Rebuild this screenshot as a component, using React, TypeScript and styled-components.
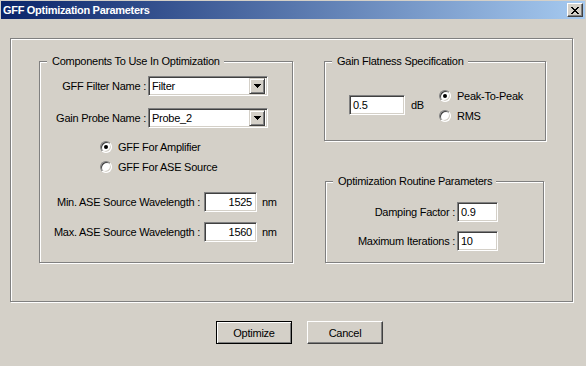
import React from "react";
import styled, { createGlobalStyle } from "styled-components";

const Global = createGlobalStyle`
  html, body { margin: 0; padding: 0; background: #d4d0c8; }
  body {
    width: 586px; height: 366px; overflow: hidden;
    font-family: "Liberation Sans", Arial, sans-serif;
    font-size: 11px; color: #000;
    letter-spacing: -0.25px;
  }
`;

const Window = styled.div`
  width: 586px;
  height: 366px;
  box-sizing: border-box;
  background: #d4d0c8;
  padding: 1px 0 0 1px;
  display: flex;
  flex-direction: column;
`;

const TitleBar = styled.div`
  width: 584px;
  height: 18px;
  box-sizing: border-box;
  padding: 0 2px;
  display: flex;
  align-items: center;
  justify-content: space-between;
  background: linear-gradient(to right, #0a246a, #a6caf0);
`;

const TitleText = styled.span`
  color: #fff;
  font-weight: bold;
  font-size: 11px;
  letter-spacing: -0.3px;
  white-space: nowrap;
`;

const CloseButton = styled.div`
  width: 16px;
  height: 14px;
  box-sizing: border-box;
  background: #d4d0c8;
  border: 1px solid;
  border-color: #fff #404040 #404040 #fff;
  box-shadow: inset -1px -1px #808080;
  display: flex;
  align-items: center;
  justify-content: center;
`;

const Frame = styled.div`
  margin: 19px 0 0 9px;
  width: 563px;
  height: 264px;
  box-sizing: border-box;
  border: 1px solid #808080;
  box-shadow: inset 1px 1px #fff, 1px 1px #fff;
  padding: 22px 0 0 28px;
  display: flex;
  gap: 31px;
`;

const Group = styled.div<{ $w: number; $h: number; $mt?: number; $ml?: number }>`
  position: relative;
  width: ${(p) => p.$w}px;
  height: ${(p) => p.$h}px;
  margin-top: ${(p) => p.$mt ?? 0}px;
  margin-left: ${(p) => p.$ml ?? 0}px;
  box-sizing: border-box;
  border: 1px solid #808080;
  box-shadow: inset 1px 1px #fff, 1px 1px #fff;
  flex-shrink: 0;
`;

const GroupTitle = styled.span`
  position: absolute;
  top: -7px;
  left: 7px;
  padding: 0 4px 0 5px;
  background: #d4d0c8;
  line-height: 13px;
  white-space: nowrap;
`;

const Column = styled.div`
  display: flex;
  flex-direction: column;
`;

const GroupBody = styled.div<{ $pt: number; $pl?: number; $gap?: number }>`
  display: flex;
  flex-direction: column;
  padding-top: ${(p) => p.$pt}px;
  padding-left: ${(p) => p.$pl ?? 0}px;
  gap: ${(p) => p.$gap ?? 0}px;
`;

const Row = styled.div<{ $mt?: number }>`
  display: flex;
  align-items: center;
  margin-top: ${(p) => p.$mt ?? 0}px;
`;

const Label = styled.span<{ $w: number; $mr: number }>`
  width: ${(p) => p.$w}px;
  margin-right: ${(p) => p.$mr}px;
  text-align: right;
  white-space: nowrap;
  flex-shrink: 0;
`;

const sunken = `
  box-sizing: border-box;
  border: 1px solid;
  border-color: #808080 #fff #fff #808080;
  box-shadow: inset 1px 1px #404040, inset -1px -1px #d4d0c8;
  background: #fff;
`;

const Field = styled.div<{ $w: number; $align?: string }>`
  ${sunken}
  width: ${(p) => p.$w}px;
  height: 20px;
  padding: 0 4px 0 3px;
  line-height: 18px;
  text-align: ${(p) => p.$align ?? "left"};
  flex-shrink: 0;
`;

const Combo = styled.div`
  ${sunken}
  width: 120px;
  height: 20px;
  padding: 2px;
  display: flex;
  align-items: center;
  flex-shrink: 0;
`;

const ComboText = styled.span`
  flex: 1;
  padding-left: 1px;
  line-height: 16px;
`;

const DropButton = styled.div`
  width: 16px;
  height: 16px;
  box-sizing: border-box;
  background: #d4d0c8;
  border: 1px solid;
  border-color: #d4d0c8 #404040 #404040 #d4d0c8;
  box-shadow: inset 1px 1px #fff, inset -1px -1px #808080;
  display: flex;
  align-items: center;
  justify-content: center;
`;

const Unit = styled.span<{ $ml: number }>`
  margin-left: ${(p) => p.$ml}px;
`;

const RadioRow = styled.div<{ $mt?: number }>`
  display: flex;
  align-items: center;
  gap: 6px;
  height: 16px;
  margin-top: ${(p) => p.$mt ?? 0}px;
`;

const RadioCircle = styled.span<{ $on?: boolean }>`
  position: relative;
  width: 12px;
  height: 12px;
  box-sizing: border-box;
  border-radius: 50%;
  border: 1px solid;
  border-color: #808080 #fff #fff #808080;
  box-shadow: inset 1px 1px #404040, inset -1px -1px #d4d0c8;
  background: #fff;
  flex-shrink: 0;
  &::after {
    content: "";
    display: ${(p) => (p.$on ? "block" : "none")};
    position: absolute;
    left: 3px;
    top: 3px;
    width: 4px;
    height: 4px;
    border-radius: 50%;
    background: #000;
  }
`;

const GainRow = styled.div`
  display: flex;
  align-items: flex-start;
  padding: 26px 0 0 24px;
`;

const UnitBlock = styled.div`
  width: 90px;
  height: 20px;
  margin-top: 7px;
  display: flex;
  align-items: center;
`;

const RadioColumn = styled.div`
  display: flex;
  flex-direction: column;
  gap: 4px;
`;

const ButtonRow = styled.div`
  display: flex;
  gap: 15px;
  margin-top: 19px;
  padding-left: 215px;
`;

const Button = styled.div<{ $default?: boolean }>`
  width: 76px;
  height: 23px;
  box-sizing: border-box;
  display: flex;
  align-items: center;
  justify-content: center;
  background: #d4d0c8;
  border: 1px solid;
  border-color: ${(p) => (p.$default ? "#000" : "#fff #404040 #404040 #fff")};
  box-shadow: ${(p) =>
    p.$default ? "inset 1px 1px #fff, inset -1px -1px #808080" : "inset -1px -1px #808080"};
`;

const CloseGlyph = () => (
  <svg width="8" height="7" viewBox="0 0 8 7" shapeRendering="crispEdges">
    <path
      fill="#000"
      d="M0 0h2v1H0zM6 0h2v1H6zM1 1h2v1H1zM5 1h2v1H5zM2 2h4v1H2zM3 3h2v1H3zM2 4h4v1H2zM1 5h2v1H1zM5 5h2v1H5zM0 6h2v1H0zM6 6h2v1H6z"
    />
  </svg>
);

const ArrowGlyph = () => (
  <svg width="7" height="4" viewBox="0 0 7 4" shapeRendering="crispEdges">
    <path fill="#000" d="M0 0h7v1H0zM1 1h5v1H1zM2 2h3v1H2zM3 3h1v1H3z" />
  </svg>
);

export default function App() {
  return (
    <>
      <Global />
      <Window>
        <TitleBar>
          <TitleText>GFF Optimization Parameters</TitleText>
          <CloseButton>
            <CloseGlyph />
          </CloseButton>
        </TitleBar>
        <Frame>
          <Group $w={254} $h={202}>
            <GroupTitle>Components To Use In Optimization</GroupTitle>
            <GroupBody $pt={14}>
              <Row>
                <Label $w={106} $mr={2}>GFF Filter Name :</Label>
                <Combo>
                  <ComboText>Filter</ComboText>
                  <DropButton>
                    <ArrowGlyph />
                  </DropButton>
                </Combo>
              </Row>
              <Row $mt={12}>
                <Label $w={106} $mr={2}>Gain Probe Name :</Label>
                <Combo>
                  <ComboText>Probe_2</ComboText>
                  <DropButton>
                    <ArrowGlyph />
                  </DropButton>
                </Combo>
              </Row>
              <GroupBody $pt={11} $pl={60} $gap={4}>
                <RadioRow>
                  <RadioCircle $on />
                  <span>GFF For Amplifier</span>
                </RadioRow>
                <RadioRow>
                  <RadioCircle />
                  <span>GFF For ASE Source</span>
                </RadioRow>
              </GroupBody>
              <Row $mt={17}>
                <Label $w={160} $mr={4}>Min. ASE Source Wavelength :</Label>
                <Field $w={53} $align="right">1525</Field>
                <Unit $ml={5}>nm</Unit>
              </Row>
              <Row $mt={10}>
                <Label $w={160} $mr={4}>Max. ASE Source Wavelength :</Label>
                <Field $w={53} $align="right">1560</Field>
                <Unit $ml={5}>nm</Unit>
              </Row>
            </GroupBody>
          </Group>
          <Column>
            <Group $w={222} $h={80}>
              <GroupTitle>Gain Flatness Specification</GroupTitle>
              <GainRow>
                <UnitBlock>
                  <Field $w={56}>0.5</Field>
                  <Unit $ml={6}>dB</Unit>
                </UnitBlock>
                <RadioColumn>
                  <RadioRow>
                    <RadioCircle $on />
                    <span>Peak-To-Peak</span>
                  </RadioRow>
                  <RadioRow>
                    <RadioCircle />
                    <span>RMS</span>
                  </RadioRow>
                </RadioColumn>
              </GainRow>
            </Group>
            <Group $w={219} $h={82} $mt={40} $ml={1}>
              <GroupTitle>Optimization Routine Parameters</GroupTitle>
              <GroupBody $pt={20} $gap={9}>
                <Row>
                  <Label $w={129} $mr={2}>Damping Factor :</Label>
                  <Field $w={41}>0.9</Field>
                </Row>
                <Row>
                  <Label $w={129} $mr={2}>Maximum Iterations :</Label>
                  <Field $w={41}>10</Field>
                </Row>
              </GroupBody>
            </Group>
          </Column>
        </Frame>
        <ButtonRow>
          <Button $default>Optimize</Button>
          <Button>Cancel</Button>
        </ButtonRow>
      </Window>
    </>
  );
}
